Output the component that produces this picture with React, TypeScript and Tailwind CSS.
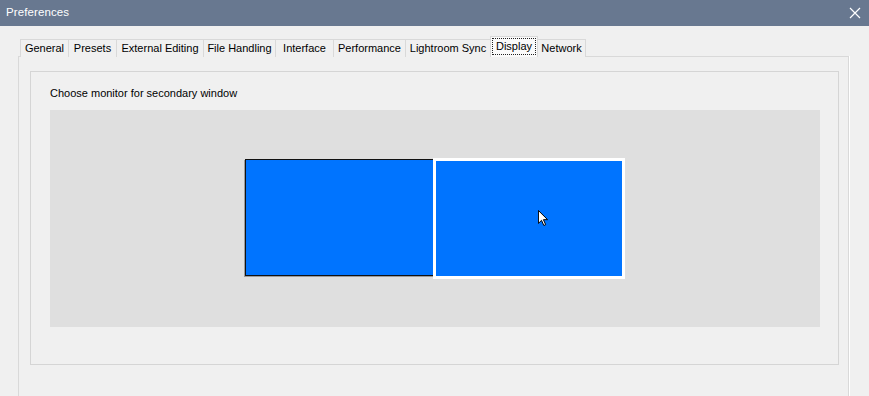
import React from 'react';

const tabs = [
  { name: 'General', w: 48 },
  { name: 'Presets', w: 48 },
  { name: 'External Editing', w: 87 },
  { name: 'File Handling', w: 72 },
  { name: 'Interface', w: 58 },
  { name: 'Performance', w: 72 },
  { name: 'Lightroom Sync', w: 85 },
  { name: 'Display', w: 48 },
  { name: 'Network', w: 48 },
];

export default function App() {
  const active = 'Display';

  return (
    <div
      className="w-[869px] h-[396px] bg-[#f0f0f0] overflow-hidden text-[#000] text-[11px]"
      style={{ fontFamily: '"Liberation Sans", Arial, sans-serif' }}
    >
      {/* Title bar */}
      <div className="h-[26px] bg-[#687890] flex items-center justify-between pl-[6px] pr-[7px] text-white">
        <span className="text-[11.5px] tracking-[0.1px]">Preferences</span>
        <svg width="12" height="12" viewBox="0 0 12 12" className="mr-[1px]">
          <path d="M1 1 L11 11 M11 1 L1 11" stroke="#fff" strokeWidth="1.2" />
        </svg>
      </div>

      <div className="pl-[18px] pt-[10px]">
        {/* Tab strip */}
        <div className="flex items-end h-[21px] pl-[2px] relative z-10">
          {tabs.map((t, i) => {
            const sel = t.name === active;
            const afterSel = i > 0 && tabs[i - 1].name === active;
            const last = i === tabs.length - 1;
            return (
              <div
                key={t.name}
                style={{ width: t.w }}
                className={`flex items-center justify-center border-[#d9d9d9] border-t ${
                  sel
                    ? 'h-[21px] bg-[#fafafa] border-l border-r'
                    : `h-[18px] bg-[#f0f0f0] ${afterSel ? '' : 'border-l'} ${last ? 'border-r' : ''}`
                }`}
              >
                {sel ? (
                  <span className="border border-dotted border-[#222] px-[3px] leading-[15px] -mt-[2px]">{t.name}</span>
                ) : (
                  <span className="leading-[17px]">{t.name}</span>
                )}
              </div>
            );
          })}
        </div>

        {/* Tab panel */}
        <div className="w-[831px] h-[360px] border border-[#d9d9d9] -mt-[1px] shadow-[1px_0_0_#fff] pl-[11px] pt-[14px]">
          {/* Group box */}
          <div className="w-[809px] h-[294px] border border-[#d5d5d5] pl-[19px] pt-[14px]">
            <div className="leading-[14px] text-[11px]">Choose monitor for secondary window</div>
            <div className="mt-[10px] w-[770px] h-[217px] bg-[#dfdfdf] flex items-start pl-[195px] pt-[48px]">
              <div className="mt-[1px] w-[190px] h-[117px] bg-[#0074ff] border border-[#111] shadow-[-1px_1px_0_#9a9a9a]" />
              <div className="relative -ml-[2px] w-[192px] h-[121px] bg-[#0074ff] border-[3px] border-white">
                <svg
                  width="10"
                  height="16"
                  viewBox="0 0 12 19"
                  className="absolute left-[102px] top-[49px]"
                >
                  <path
                    d="M0.5 0.5 L0.5 16 L4.2 12.3 L7 18.5 L9.2 17.5 L6.5 11.5 L11.5 11.5 Z"
                    fill="#fff"
                    stroke="#000"
                    strokeWidth="1.2"
                    strokeLinejoin="miter"
                  />
                </svg>
              </div>
            </div>
          </div>
        </div>
      </div>
    </div>
  );
}
